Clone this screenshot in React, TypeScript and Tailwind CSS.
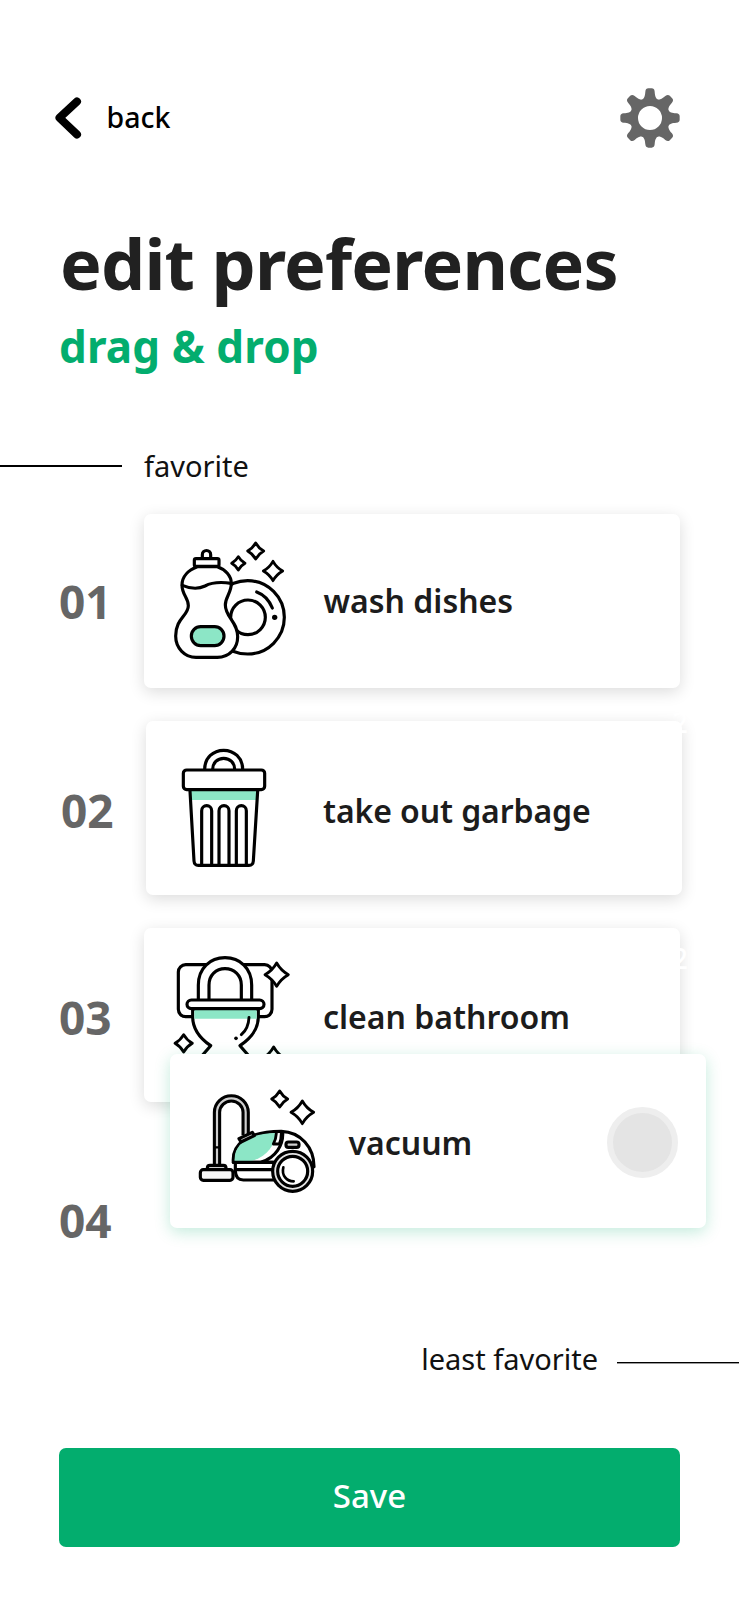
import type { ReactNode } from "react";

const MINT = "#8ce6c6";
const STEEL = "#cfcfcf";

function Sparkle({ x, y, r }: { x: number; y: number; r: number }) {
  const c = r * 0.36;
  return (
    <path
      strokeWidth={8.500}
      d={`M${x} ${y - r}Q${x + c} ${y - c} ${x + r} ${y}Q${x + c} ${y + c} ${x} ${y + r}Q${x - c} ${y + c} ${x - r} ${y}Q${x - c} ${y - c} ${x} ${y - r}Z`}
    />
  );
}

function Icon({ viewBox, className, children }: { viewBox: string; className: string; children: ReactNode }) {
  return (
    <svg
      viewBox={viewBox}
      className={className}
      fill="none"
      stroke="#000"
      strokeWidth={9.500}
      strokeLinecap="round"
      strokeLinejoin="round"
      aria-hidden="true"
    >
      {children}
    </svg>
  );
}

function DishesIcon() {
  return (
    <Icon viewBox="0 0 420 420" className="ml-[15.5px] mt-4 h-[140px] w-[140px] shrink-0">
      <circle cx="263" cy="262" r="110" />
      <circle cx="264" cy="262" r="52" />
      <path d="M290 186C312 194 328 212 337 234" />
      <circle cx="344" cy="262" r="8" fill="#000" stroke="none" />
      <path
        fill="#fff"
        d="M112 110C85 120 66 140 66 165C66 195 85 203 85 227C85 257 47 265 47 318C47 355 75 382 108 382H172C208 382 233 355 233 320C233 275 196 262 196 225C196 200 214 190 214 160C214 138 196 118 172 110Z"
      />
      <path d="M67 166C95 178 115 178 135 168C155 157 180 155 214 160" />
      <path fill="#fff" d="M127 86V74a12.500 12.500 0 0 1 25 0V86" />
      <rect x="103" y="86" width="74" height="23" rx="5" fill="#fff" />
      <rect x="94" y="290" width="98" height="57" rx="28" fill={MINT} />
      <Sparkle x={235} y={100} r={20} />
      <Sparkle x={287} y={63} r={24} />
      <Sparkle x={339} y={123} r={29} />
    </Icon>
  );
}

function TrashIcon() {
  return (
    <Icon viewBox="0 0 420 420" className="ml-[13.5px] mt-3.5 h-[140px] w-[140px] shrink-0">
      <path d="M134 103C134 68 160 46 191 46C222 46 248 68 248 103" />
      <path d="M158 103C158 84 172 70 191 70C210 70 224 84 224 103" />
      <path d="M93 168H291V195H93Z" fill={MINT} stroke="none" />
      <rect x="70" y="105" width="244" height="59" rx="10" fill="#fff" />
      <path d="M90 168L102 378Q103 391 115 391H267Q279 391 280 378L293 168" />
      <path d="M125 391V227a15 15 0 0 1 30 0V391M177 391V227a15 15 0 0 1 30 0V391M229 391V227a15 15 0 0 1 30 0V391" />
    </Icon>
  );
}

function ToiletIcon() {
  return (
    <Icon viewBox="0 0 420 420" className="ml-4 mt-3 h-[140px] w-[140px] shrink-0">
      <rect x="55" y="74" width="281" height="156" rx="22" />
      <path fill="#fff" d="M115 180V135C115 85 150 53 195 53C240 53 275 85 275 135V180" />
      <path d="M147 180V135C147 105 168 86 195 86C222 86 244 105 244 135V180" />
      <path
        fill="#fff"
        d="M98 208V230C98 270 120 295 152 317L122 352V390H270V352L240 317C272 295 295 270 295 230V208Z"
      />
      <path d="M103 208H290V236H103Z" fill={MINT} stroke="none" />
      <rect x="81" y="180" width="231" height="26" rx="13" fill="#fff" />
      <path strokeWidth={8.500} d="M267 232C266 255 258 272 244 284" />
      <circle cx="228" cy="295" r="5.500" fill="#000" stroke="none" />
      <g fill="#fff">
        <Sparkle x={350} y={104} r={35} />
        <Sparkle x={71} y={310} r={26} />
        <Sparkle x={341} y={356} r={35} />
      </g>
    </Icon>
  );
}

function VacuumIcon() {
  return (
    <Icon viewBox="0 0 450 420" className="ml-[10px] mt-4 h-[140px] w-[150px] shrink-0">
      <g strokeLinecap="butt">
        <path strokeWidth={25} d="M111 290V127a43 42 0 0 1 86 0V196" />
        <path strokeWidth={6.500} stroke={STEEL} d="M111 290V127a43 42 0 0 1 86 0V196" />
      </g>
      <path strokeWidth={7} d="M104 232H118" />
      <path fill={STEEL} d="M82 299v-5q0-8 8-8h40q8 0 8 8v5" />
      <rect x="61" y="299" width="98" height="32" rx="9" fill="#f6f6f6" />
      <path fill="#fff" d="M166 277V303C167 321 176 330 190 330H300V277Z" />
      <path fill="#fff" d="M160 277C156 225 195 186 304 184C362 186 402 232 402 290L300 330L280 277Z" />
      <path fill={MINT} stroke="none" d="M164 273C161 228 196 191 288 189C286 226 258 262 214 273Z" />
      <path d="M308 188C310 225 287 264 244 276M166 299H280M160 277H290" />
      <path fill="#fff" strokeWidth={8.500} d="M289 190Q288 208 280 222H298Q304 208 304 190" />
      <path fill={STEEL} d="M177 206L217 187L223 197L183 216Z" />
      <rect x="318" y="216" width="39" height="16" rx="7" fill={STEEL} />
      <circle cx="338" cy="304" r="60" fill="#e4e4e4" />
      <circle cx="338" cy="304" r="45" fill="#fff" />
      <path strokeWidth={8} d="M310 292C304 316 320 334 341 334" />
      <Sparkle x={299} y={87} r={24} />
      <Sparkle x={367} y={127} r={34} />
    </Icon>
  );
}

function GearIcon() {
  return (
    <svg viewBox="-90 -90 180 180" className="h-[60px] w-[60px]" fill="#666" aria-hidden="true">
      <circle r="48" fill="none" stroke="#666" strokeWidth="24" />
      {[0, 45, 90, 135, 180, 225, 270, 315].map((a) => (
        <path
          key={a}
          transform={`rotate(${a})`}
          d="M-28 -50C-16 -60 -15 -66 -14 -79Q-13 -89 -5 -89H5Q13 -89 14 -79C15 -66 16 -60 28 -50Z"
        />
      ))}
    </svg>
  );
}

const cardBase = "flex h-[174px] w-[536px] shrink-0 items-start rounded-[7px] bg-white";
const labelBase = "flex h-[174px] items-center text-[32px] leading-none font-semibold text-[#1c1c1c] whitespace-nowrap";
const numberBase = "w-[85px] shrink-0 text-[46px] leading-none font-bold text-[#666]";

const chores = [
  { n: "01", label: "wash dishes", icon: <DishesIcon />, num: "", card: "", text: "ml-6" },
  { n: "02", label: "take out garbage", icon: <TrashIcon />, num: "pl-0.5 pt-1", card: "ml-0.5", text: "ml-[23.5px] pt-[6px] tracking-[-0.1px]" },
  { n: "03", label: "clean bathroom", icon: <ToiletIcon />, num: "pt-1", card: "", text: "ml-[23px] pt-[3px]" },
];

export default function App() {
  return (
    <div className="relative flex h-[1600px] w-[739px] flex-col overflow-hidden bg-white font-['Noto_Sans',sans-serif]">
      <header className="mt-[88px] flex h-[60px] items-center justify-between pr-[59px] pl-[55px]">
        <button className="flex items-center">
          <svg
            viewBox="0 0 28 43"
            className="h-[43px] w-[28px]"
            fill="none"
            stroke="#000"
            strokeWidth="8"
            strokeLinecap="round"
            strokeLinejoin="round"
            aria-hidden="true"
          >
            <path d="M22 4.500L4.500 20.800L22 37.500" />
          </svg>
          <span className="ml-[23.5px] pb-px text-[28.5px] leading-none font-medium text-black">back</span>
        </button>
        <button aria-label="settings">
          <GearIcon />
        </button>
      </header>

      <h1 className="mt-[80px] ml-[60px] text-[70px] leading-none font-bold tracking-[-0.8px] whitespace-nowrap text-[#212121]">
        edit preferences
      </h1>
      <h2 className="mt-[26px] ml-[59px] text-[44px] leading-none font-bold tracking-[0.1px] text-[#03ad6e]">
        drag &amp; drop
      </h2>

      <div className="mt-[83px] flex h-[30px] items-center gap-[22px]">
        <span className="h-0.5 w-[122px] bg-black" />
        <span className="pb-0.5 text-[29px] leading-none text-[#111]">favorite</span>
      </div>

      <main className="mt-[33px] ml-[59px] flex flex-col gap-[33px]">
        {chores.map((c) => (
          <div key={c.n} className="flex items-center">
            <span className={`${numberBase} ${c.num}`}>{c.n}</span>
            <div className={`${cardBase} ${c.card} shadow-[0_4px_16px_rgba(0,0,0,0.14)]`}>
              {c.icon}
              <span className={`${labelBase} ${c.text}`}>{c.label}</span>
            </div>
          </div>
        ))}
        <div className="flex h-[174px] items-center">
          <span className={`${numberBase} pb-1`}>04</span>
        </div>
      </main>

      <span className="absolute top-[708px] left-[672px] text-[28px] leading-none font-medium text-white">2</span>
      <span className="absolute top-[944px] left-[672px] text-[28px] leading-none font-medium text-white">2</span>

      <div className={`${cardBase} absolute top-[1054px] left-[169.5px] shadow-[0_4px_16px_rgba(3,173,110,0.24)]`}>
        <VacuumIcon />
        <span className={`${labelBase} ml-[19px] pt-[3px]`}>vacuum</span>
        <span className="mt-[53px] mr-[28px] ml-auto h-[71px] w-[71px] rounded-full border-[6px] border-[#eeeeee] bg-[#e4e4e4]" />
      </div>

      <div className="mt-[34px] flex h-[30px] items-center justify-end gap-[19px]">
        <span className="text-[29px] leading-none text-[#111]">least favorite</span>
        <span className="mt-[9px] h-0.5 w-[122px] border-b border-[#999] bg-black" />
      </div>

      <button className="mt-[75px] ml-[59px] flex h-[99px] w-[621px] items-center justify-center rounded-[7px] bg-[#03ad6e] pb-[5px] text-[33px] leading-none font-medium text-white">
        Save
      </button>
    </div>
  );
}
